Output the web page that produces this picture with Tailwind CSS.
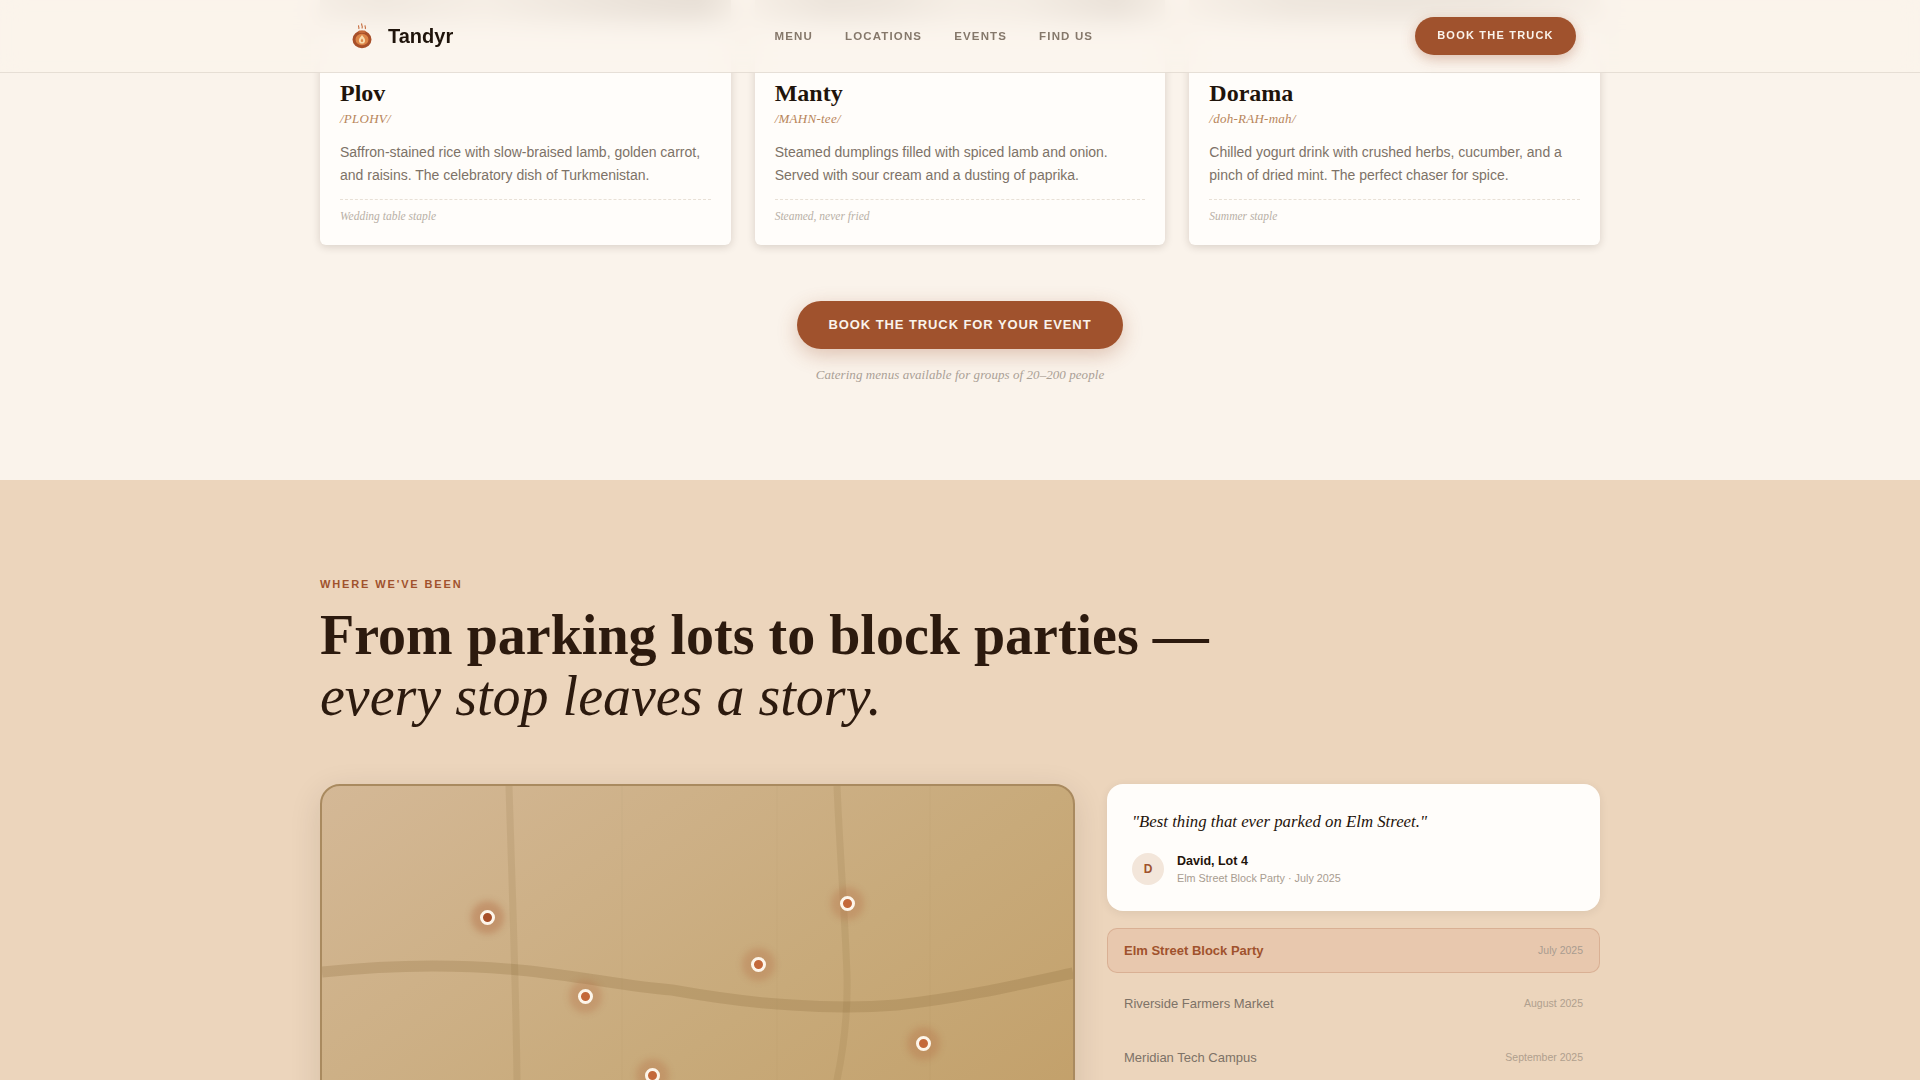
<!DOCTYPE html>
<html lang="en">
<head>
    <meta charset="UTF-8">
    <meta name="viewport" content="width=device-width, initial-scale=1.0">
    <title>Tandyr</title>
    <script src="https://cdn.jsdelivr.net/npm/@tailwindcss/browser@4"></script>
</head>
<body class="h-[1080px] overflow-hidden bg-[#faf3eb] font-['Liberation_Sans',Arial,sans-serif] text-[#2c1a0e]">
    <header class="fixed top-0 inset-x-0 z-20 h-[73px] bg-[#faf3eb]/85 backdrop-blur-md border-b border-[#2c1a0e]/10">
        <div class="w-[1280px] mx-auto h-[72px] flex items-center pl-[30px] pr-6">
            <div class="flex items-center gap-[14px] w-[424.5px]">
                <svg class="w-[24px] h-[26px]" viewBox="0 0 24 26" fill="none">
                    <path d="M12 .5c-1.500 1.600 1.500 2.600-.1 5M8.800 2.300c-1 1.300.9 2-.1 3.700M15.300 2.300c-1 1.300.9 2-.1 3.700" stroke="#c4693a" stroke-width="1.100"/>
                    <ellipse cx="12" cy="16.500" rx="8" ry="7.200" fill="#dc8548" stroke="#a8502a" stroke-width="3"/>
                    <rect x="8.500" y="7.500" width="7" height="2.500" rx="1" fill="#c4693a"/>
                    <path d="M12 12c1.500 1.900 3.100 3.500 3.100 5.400a3.100 3.100 0 0 1-6.200 0c0-1.900 1.600-3.500 3.100-5.400z" fill="#f8dcae"/>
                    <path d="M12 15.500c.7.800 1.200 1.500 1.200 2.300a1.200 1.200 0 0 1-2.400 0c0-.8.500-1.500 1.200-2.300z" fill="#dc8548"/>
                </svg>
                <span class="text-[20px] font-bold leading-none text-[#1f140b]">Tandyr</span>
            </div>
            <nav class="mt-[1px] flex items-center gap-8 text-[11.5px] font-bold tracking-[0.1em] text-[#85786b]">
                <a href="#">MENU</a>
                <a href="#">LOCATIONS</a>
                <a href="#">EVENTS</a>
                <a href="#">FIND US</a>
            </nav>
            <a href="#" class="ml-auto -mt-[1px] h-[38px] w-[161px] flex items-center justify-center rounded-full bg-[#a0522d] text-[11px] font-bold tracking-[0.11em] text-[#faf3eb] shadow-[0_4px_14px_rgba(160,82,45,0.35)]">BOOK THE TRUCK</a>
        </div>
    </header>

    <main>
        <section class="h-[480px] overflow-hidden">
            <div class="w-[1280px] mx-auto">
                <div class="grid grid-cols-3 gap-6 h-[245px]">
                    <article class="flex flex-col h-[245px] bg-[#fffdfa] rounded-b-md shadow-[0_2px_8px_rgba(44,26,14,0.16)] overflow-hidden">
                        <div class="h-[22px] bg-[linear-gradient(90deg,#d0c6ba_0%,#b8ac9e_15%,#d8cec2_40%,#8c7e70_78%,#7c6e60_92%,#b8ac9e_100%)]"></div>
                        <div class="mt-auto px-5 pb-[21px]">
                            <h3 class="font-['Liberation_Serif',serif] text-[24px] font-bold leading-[28px] text-[#1f140b]">Plov</h3>
                            <p class="mt-[2px] font-['Liberation_Serif',serif] italic text-[13px] leading-[20px] tracking-[0.02em] text-[#b8855a]">/PLOHV/</p>
                            <p class="mt-[12px] text-[14px] leading-[23px] text-[#7d7267]">Saffron-stained rice with slow-braised lamb, golden carrot, and raisins. The celebratory dish of Turkmenistan.</p>
                            <p class="mt-3 pt-[8px] border-t border-dashed border-[#e8e0d6] font-['Liberation_Serif',serif] italic text-[11.5px] leading-[16px] text-[#b8b0a6]">Wedding table staple</p>
                        </div>
                    </article>
                    <article class="flex flex-col h-[245px] bg-[#fffdfa] rounded-b-md shadow-[0_2px_8px_rgba(44,26,14,0.16)] overflow-hidden">
                        <div class="h-[22px] bg-[linear-gradient(90deg,#d8cec2_0%,#9c8e80_18%,#a89c8e_32%,#d8cec2_50%,#d0c6ba_65%,#8c7e70_88%,#d0c6ba_100%)]"></div>
                        <div class="mt-auto px-5 pb-[21px]">
                            <h3 class="font-['Liberation_Serif',serif] text-[24px] font-bold leading-[28px] text-[#1f140b]">Manty</h3>
                            <p class="mt-[2px] font-['Liberation_Serif',serif] italic text-[13px] leading-[20px] tracking-[0.02em] text-[#b8855a]">/MAHN-tee/</p>
                            <p class="mt-[12px] text-[14px] leading-[23px] text-[#7d7267]">Steamed dumplings filled with spiced lamb and onion. Served with sour cream and a dusting of paprika.</p>
                            <p class="mt-3 pt-[8px] border-t border-dashed border-[#e8e0d6] font-['Liberation_Serif',serif] italic text-[11.5px] leading-[16px] text-[#b8b0a6]">Steamed, never fried</p>
                        </div>
                    </article>
                    <article class="flex flex-col h-[245px] bg-[#fffdfa] rounded-b-md shadow-[0_2px_8px_rgba(44,26,14,0.16)] overflow-hidden">
                        <div class="h-[22px] bg-[linear-gradient(90deg,#e4dace_0%,#a89c8e_25%,#a09486_50%,#a89c8e_72%,#c4b8ac_88%,#e4dace_100%)]"></div>
                        <div class="mt-auto px-5 pb-[21px]">
                            <h3 class="font-['Liberation_Serif',serif] text-[24px] font-bold leading-[28px] text-[#1f140b]">Dorama</h3>
                            <p class="mt-[2px] font-['Liberation_Serif',serif] italic text-[13px] leading-[20px] tracking-[0.02em] text-[#b8855a]">/doh-RAH-mah/</p>
                            <p class="mt-[12px] text-[14px] leading-[23px] text-[#7d7267]">Chilled yogurt drink with crushed herbs, cucumber, and a pinch of dried mint. The perfect chaser for spice.</p>
                            <p class="mt-3 pt-[8px] border-t border-dashed border-[#e8e0d6] font-['Liberation_Serif',serif] italic text-[11.5px] leading-[16px] text-[#b8b0a6]">Summer staple</p>
                        </div>
                    </article>
                </div>
                <div class="mt-14 flex flex-col items-center">
                    <a href="#" class="h-[48px] w-[326px] flex items-center justify-center rounded-full bg-[#a0522d] text-[13px] font-bold tracking-[0.07em] text-[#faf3eb] shadow-[0_6px_20px_rgba(160,82,45,0.3)]">BOOK THE TRUCK FOR YOUR EVENT</a>
                    <p class="mt-4 font-['Liberation_Serif',serif] italic text-[13px] leading-[20px] tracking-[0.005em] text-[#aaa095]">Catering menus available for groups of 20–200 people</p>
                </div>
            </div>
        </section>

        <section class="h-[600px] overflow-hidden bg-[#ecd5bc]">
            <div class="w-[1280px] mx-auto pt-[96px]">
                <p class="text-[11px] font-bold leading-[16px] tracking-[0.17em] text-[#a0522d]">WHERE WE'VE BEEN</p>
                <h2 class="mt-[13px] font-['Liberation_Serif',serif] text-[56px] leading-[61px] font-bold text-[#2c1a0e]">From parking lots to block parties —<br><span class="italic font-normal">every stop leaves a story.</span></h2>
                <div class="mt-[57px] flex gap-8 items-start">
                    <!-- Map: pins are placed on a free canvas -->
                    <div class="relative w-[755px] h-[520px] shrink-0 overflow-hidden rounded-[20px] border-2 border-[#a98a5f] bg-gradient-to-br from-[#d4b896] via-[#c8aa7a] to-[#bf9a60] shadow-[0_8px_32px_rgba(44,26,14,0.12)]">
                        <svg class="absolute inset-0 w-full h-full" viewBox="0 0 751 516" fill="none">
                            <path d="M300 0V516M455 0V516M608 0V516" stroke="#8a6a3a" stroke-opacity="0.04" stroke-width="1"/>
                            <path d="M0 186C65 179 135 178 197 184C260 190 300 200 350 204C395 212 430 217 470 219C510 222 540 222 575 219C640 212 700 198 751 187" stroke="#8a6a3a" stroke-opacity="0.25" stroke-width="11"/>
                            <path d="M187 0C190 100 194 200 195 294C195 380 195 450 195 516" stroke="#8a6a3a" stroke-opacity="0.14" stroke-width="7"/>
                            <path d="M515 0C518 70 523 130 525 190C526 230 520 270 515 294C512 350 512 430 512 516" stroke="#8a6a3a" stroke-opacity="0.14" stroke-width="7"/>
                        </svg>
                        <span class="absolute left-[158px] top-[124px] w-[15px] h-[15px] rounded-full border-[3px] border-[#fdf5ea] bg-[#a8502a] shadow-[0_0_6px_9px_rgba(176,96,58,0.36)]"></span>
                        <span class="absolute left-[256px] top-[203px] w-[15px] h-[15px] rounded-full border-[3px] border-[#fdf5ea] bg-[#c4693a] shadow-[0_0_6px_9px_rgba(176,96,58,0.26)]"></span>
                        <span class="absolute left-[429px] top-[171px] w-[15px] h-[15px] rounded-full border-[3px] border-[#fdf5ea] bg-[#c4693a] shadow-[0_0_6px_9px_rgba(176,96,58,0.26)]"></span>
                        <span class="absolute left-[518px] top-[110px] w-[15px] h-[15px] rounded-full border-[3px] border-[#fdf5ea] bg-[#c4693a] shadow-[0_0_6px_9px_rgba(176,96,58,0.26)]"></span>
                        <span class="absolute left-[594px] top-[250px] w-[15px] h-[15px] rounded-full border-[3px] border-[#fdf5ea] bg-[#c4693a] shadow-[0_0_6px_9px_rgba(176,96,58,0.26)]"></span>
                        <span class="absolute left-[323px] top-[282px] w-[15px] h-[15px] rounded-full border-[3px] border-[#fdf5ea] bg-[#c4693a] shadow-[0_0_6px_9px_rgba(176,96,58,0.26)]"></span>
                    </div>
                    <div class="flex-1 min-w-0">
                        <div class="h-[127px] rounded-2xl bg-[#fffdfa] px-[25px] pt-[26px] shadow-[0_2px_10px_rgba(44,26,14,0.08)]">
                            <p class="font-['Liberation_Serif',serif] italic text-[16.8px] leading-[24px] text-[#1f140b]">"Best thing that ever parked on Elm Street."</p>
                            <div class="mt-[18px] flex items-center gap-[13px]">
                                <span class="w-8 h-8 rounded-full bg-[#f3e6da] flex items-center justify-center text-[12px] font-bold text-[#a0522d]">D</span>
                                <div>
                                    <p class="text-[12.5px] font-bold leading-[18px] text-[#1f140b]">David, Lot 4</p>
                                    <p class="text-[10.8px] leading-[16px] text-[#a89c90]">Elm Street Block Party · July 2025</p>
                                </div>
                            </div>
                        </div>
                        <ul class="mt-[17px] flex flex-col gap-2">
                            <li class="h-[45px] px-4 flex items-center justify-between rounded-[10px] border border-[#a0522d]/20 bg-[#e8c8ae]">
                                <span class="text-[13px] font-bold text-[#a0522d]">Elm Street Block Party</span>
                                <span class="text-[10.5px] text-[#a89c90]">July 2025</span>
                            </li>
                            <li class="h-[45px] px-4 flex items-center justify-between rounded-[10px] border border-transparent">
                                <span class="text-[13px] text-[#7d7267]">Riverside Farmers Market</span>
                                <span class="text-[10.5px] text-[#b0a08e]">August 2025</span>
                            </li>
                            <li class="h-[45px] mt-[1px] px-4 flex items-center justify-between rounded-[10px] border border-transparent">
                                <span class="text-[13px] text-[#7d7267]">Meridian Tech Campus</span>
                                <span class="text-[10.5px] text-[#b0a08e]">September 2025</span>
                            </li>
                        </ul>
                    </div>
                </div>
            </div>
        </section>
    </main>
</body>
</html>
